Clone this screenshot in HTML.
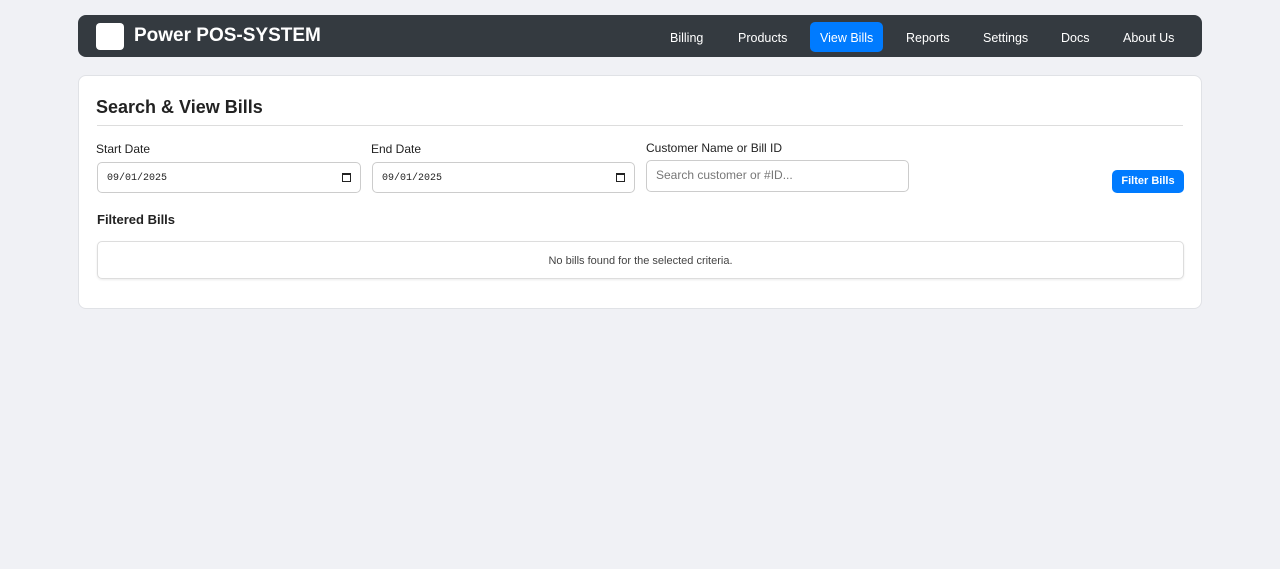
<!DOCTYPE html>
<html><head><meta charset="utf-8"><style>
*{box-sizing:border-box;margin:0;padding:0}
body{width:1280px;height:569px;background:#f0f1f5;font-family:"Liberation Sans",sans-serif;position:relative;overflow:hidden}
.nav{position:absolute;left:78px;top:15px;width:1124px;height:42px;background:#343a40;border-radius:8px}
.logo{position:absolute;left:18px;top:8px;width:28px;height:27px;background:#fff;border-radius:4px}
.brand{position:absolute;left:56px;top:10px;color:#fff;font-weight:bold;font-size:19px}
.nav a{position:absolute;top:7px;height:30px;line-height:32px;color:#fff;font-size:12.5px;padding:0 10px;border-radius:5px;text-decoration:none}
.card{position:absolute;left:78px;top:75px;width:1124px;height:234px;background:#fff;border-radius:8px;border:1px solid #e0e2e6}
h2{position:absolute;left:17px;top:21px;font-size:18px;color:#222}
.hr{position:absolute;left:18px;right:18px;top:49px;border-top:1px solid #ddd}
label{position:absolute;font-size:12px;color:#222}
.in{position:absolute;height:31px;border:1px solid #ccc;border-radius:5px;font-size:12px;padding:0 9px;line-height:29px}
.date{font-family:"Liberation Mono",monospace;font-size:10px;color:#222;line-height:31px}
.cal{position:absolute;right:9px;top:10px;width:9px;height:9px;border:1px solid #222;border-top-width:2px}
.btn{position:absolute;left:1033px;top:94px;width:72px;height:23px;background:#007bff;color:#fff;border-radius:5px;font-size:11px;font-weight:bold;text-align:center;line-height:23px}
.box{position:absolute;left:18px;top:165px;width:1087px;height:38px;border:1px solid #ddd;border-radius:5px;text-align:center;line-height:38px;font-size:11px;color:#444;box-shadow:0 1px 2px rgba(0,0,0,.08)}
</style></head><body>
<div class="nav"><div class="logo"></div><div class="brand">Power POS-SYSTEM</div>
<a style="left:582px">Billing</a><a style="left:650px">Products</a><a style="left:732px;background:#007bff">View Bills</a><a style="left:818px">Reports</a><a style="left:895px">Settings</a><a style="left:973px">Docs</a><a style="left:1035px">About Us</a></div>
<div class="card">
<h2>Search &amp; View Bills</h2><div class="hr"></div>
<label style="left:17px;top:66px">Start Date</label>
<div class="in date" style="left:18px;top:86px;width:264px">09/01/2025<span class="cal"></span></div>
<label style="left:292px;top:66px">End Date</label>
<div class="in date" style="left:293px;top:86px;width:263px">09/01/2025<span class="cal"></span></div>
<label style="left:567px;top:65px">Customer Name or Bill ID</label>
<div class="in" style="left:567px;top:84px;width:263px;height:32px;color:#777">Search customer or #ID...</div>
<div class="btn">Filter Bills</div>
<label style="left:18px;top:136px;font-weight:bold;font-size:13px">Filtered Bills</label>
<div class="box">No bills found for the selected criteria.</div>
</div>
</body></html>
